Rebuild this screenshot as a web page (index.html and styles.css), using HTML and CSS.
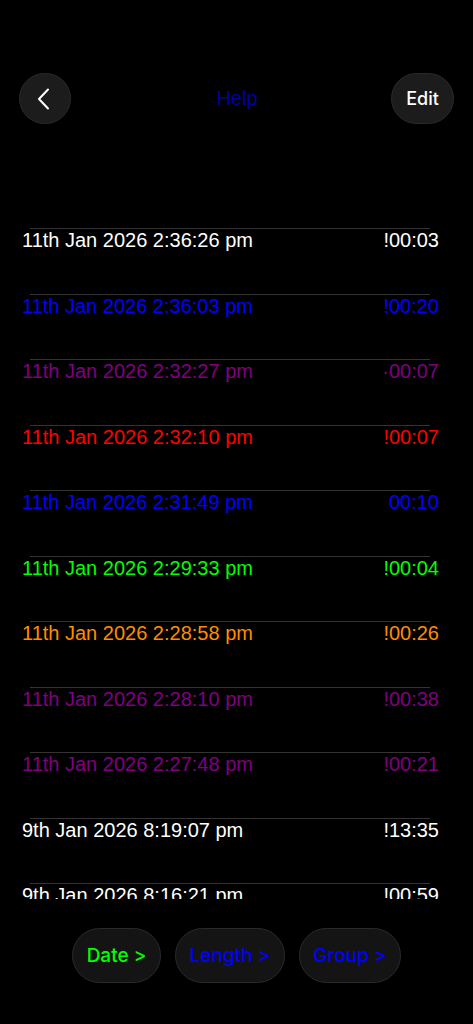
FILE: index.html
```html
<!DOCTYPE html>
<html>
<head>
  <meta name="viewport" content="width=device-width, initial-scale=1">
  <link rel="stylesheet" href="styles.css">
</head>
<body>
  <div class="screen">
    <div class="topbar">
      <button class="round back" aria-label="Back">
        <svg width="14" height="22" viewBox="0 0 14 22"><path d="M11 1.5 L2 11 L11 20.5" fill="none" stroke="#fff" stroke-width="2" stroke-linecap="round" stroke-linejoin="round"/></svg>
      </button>
      <div class="title">Help</div>
      <button class="round edit">Edit</button>
    </div>

    <div class="list">
      <div class="row white"><span>11th Jan 2026 2:36:26 pm</span><span>!00:03</span></div>
      <div class="row blue"><span>11th Jan 2026 2:36:03 pm</span><span>!00:20</span></div>
      <div class="row purple"><span>11th Jan 2026 2:32:27 pm</span><span>&middot;00:07</span></div>
      <div class="row red"><span>11th Jan 2026 2:32:10 pm</span><span>!00:07</span></div>
      <div class="row blue"><span>11th Jan 2026 2:31:49 pm</span><span>00:10</span></div>
      <div class="row green"><span>11th Jan 2026 2:29:33 pm</span><span>!00:04</span></div>
      <div class="row orange"><span>11th Jan 2026 2:28:58 pm</span><span>!00:26</span></div>
      <div class="row purple"><span>11th Jan 2026 2:28:10 pm</span><span>!00:38</span></div>
      <div class="row purple"><span>11th Jan 2026 2:27:48 pm</span><span>!00:21</span></div>
      <div class="row white"><span>9th Jan 2026 8:19:07 pm</span><span>!13:35</span></div>
      <div class="row white"><span>9th Jan 2026 8:16:21 pm</span><span>!00:59</span></div>
    </div>

    <div class="sorts">
      <button class="pill green">Date &gt;</button>
      <button class="pill blue">Length &gt;</button>
      <button class="pill blue">Group &gt;</button>
    </div>
  </div>
</body>
</html>
```

FILE: styles.css
```css
* { box-sizing: border-box; }
body { margin: 0; background: #000; color: #fff; font-family: 'Liberation Sans', Arial, sans-serif; }
.screen { width: 473px; height: 1024px; }

.topbar { display: flex; justify-content: space-between; align-items: center; padding: 73px 19px 0 19px; }
.round { height: 51px; border: 1px solid #2a2a2a; background: #1c1c1c; color: #fff; border-radius: 26px; font-family: Inter, 'Noto Sans', sans-serif; display: flex; align-items: center; justify-content: center; padding: 0; }
.back { width: 52px; padding-right: 3px; }
.edit { width: 63px; font-size: 18px; font-weight: 500; }
.title { font-size: 20px; color: #00009e; margin-left: 12px; }

.list { margin-top: 104px; height: 671px; overflow: hidden; }
.row { display: flex; flex-wrap: wrap; align-content: flex-start; justify-content: space-between; padding: 0 34px 0 22px; height: 65.5px; font-size: 20px; line-height: 23px; }
.row::before { content: ""; display: block; flex: 0 0 400px; height: 1px; margin: 0 9px 0 8px; background: #333; }

.white { color: #fff; }
.blue { color: #0000ff; }
.purple { color: #800080; }
.red { color: #ff0000; }
.green { color: #00ff00; }
.orange { color: #ff8c00; }

.sorts { display: flex; justify-content: center; gap: 14px; margin-top: 29px; }
.pill { height: 55px; padding: 0; white-space: nowrap; border: 1px solid #2a2a2a; background: #141414; border-radius: 28px; font-family: Inter, 'Noto Sans', sans-serif; font-size: 19px; font-weight: 500; }
.pill.green { width: 89px; }
.pill.blue:nth-child(2) { width: 110px; }
.pill.blue:nth-child(3) { width: 102px; }
```
